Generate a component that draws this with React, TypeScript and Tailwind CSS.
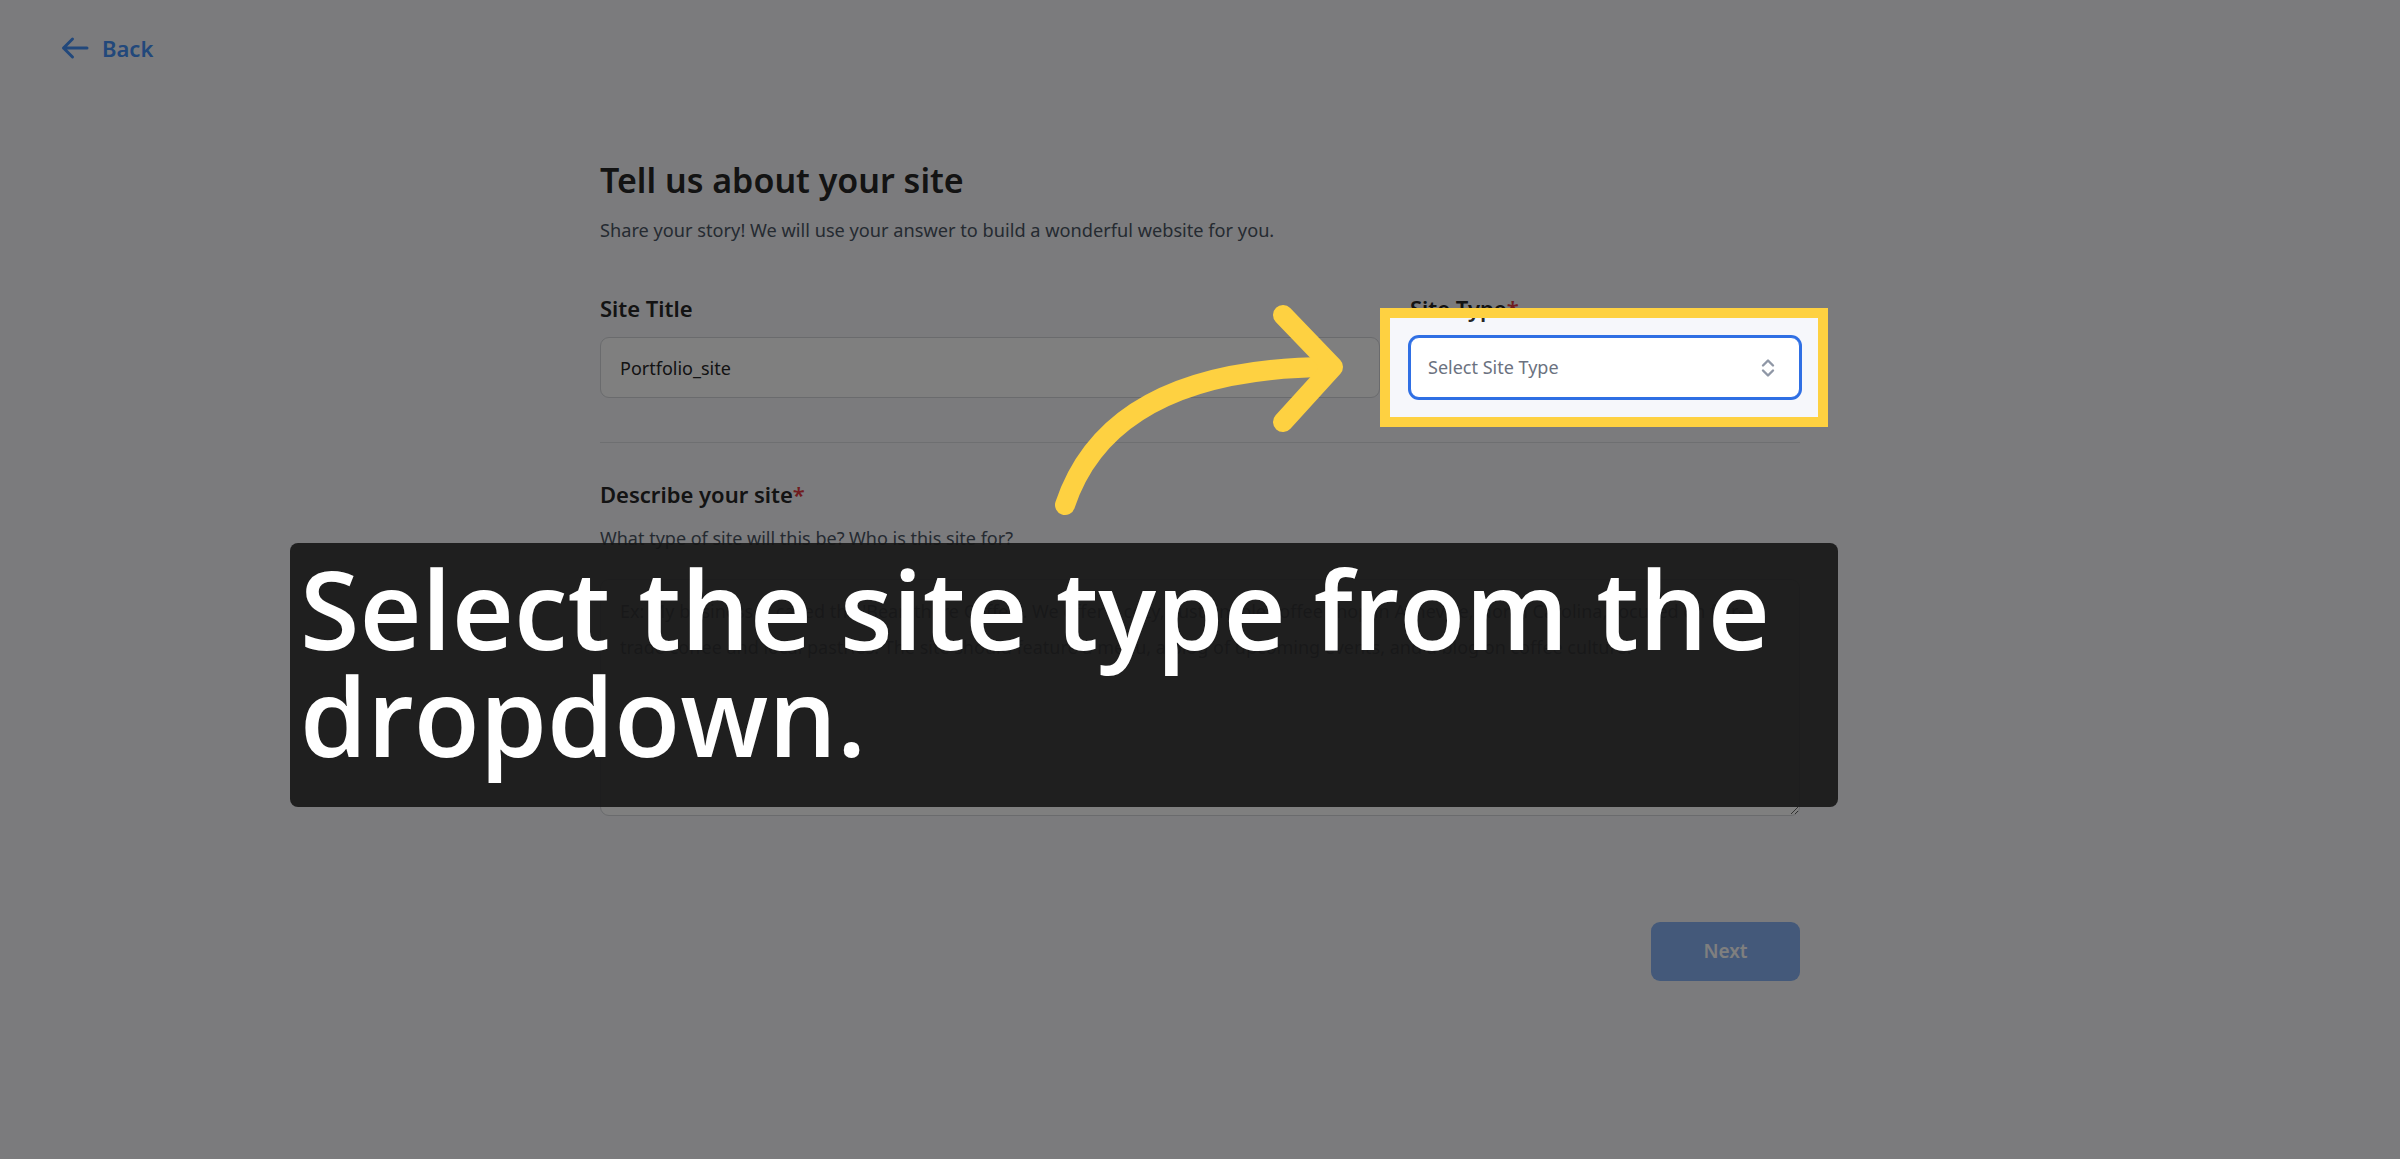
import React from "react";

export default function App() {
  const ui = { fontFamily: '"Noto Sans", "Open Sans", Arial, sans-serif' };
  return (
    <div className="relative w-full h-[1159px] overflow-hidden bg-[#f6f7fb]" style={ui}>
      {/* Back link */}
      <div className="flex items-center gap-[13px] pl-[62px] pt-[34px] h-[62px]">
        <svg width="28" height="24" viewBox="0 0 28 24" fill="none" className="-ml-[1px]">
          <path d="M26 12H2.5M11.5 3L2.5 12L11.5 21" stroke="#4590f6" strokeWidth="3" strokeLinecap="round" strokeLinejoin="round" />
        </svg>
        <span className="text-[22px] leading-[28px] font-semibold text-[#4590f6]">Back</span>
      </div>

      {/* Main form */}
      <div className="mx-auto w-[1200px] pt-[98px]">
        <h1 className="text-[34px] leading-[40px] font-semibold text-[#262626]">Tell us about your site</h1>
        <p className="mt-[18px] text-[18.2px] leading-[24px] text-[#4b5563]">
          Share your story! We will use your answer to build a wonderful website for you.
        </p>

        <div className="mt-[52px] flex gap-[30px]">
          <div className="w-[780px]">
            <label className="block text-[22px] leading-[28px] font-semibold text-[#262626]">Site Title</label>
            <input
              readOnly
              value="Portfolio_site"
              className="mt-[15px] block w-full h-[61px] rounded-[9px] border border-[#d4d6da] bg-white px-[19px] text-[18px] text-[#262626] outline-none"
              style={ui}
            />
          </div>
          <div className="flex-1">
            <label className="block text-[22px] leading-[28px] font-semibold text-[#262626]">
              Site Type<span className="text-[#e0393e]">*</span>
            </label>
            <div className="mt-[15px] flex h-[61px] items-center justify-between rounded-[9px] border border-[#2f6fe4] ring-2 ring-[#2f6fe4] bg-white pl-[17px] pr-[24px]">
              <span className="text-[18px] text-[#6b7280]">Select Site Type</span>
              <svg width="14" height="22" viewBox="0 0 14 22" fill="none">
                <path d="M2 8.5L7 3.5L12 8.5M2 13.5L7 18.5L12 13.5" stroke="#8f97a6" strokeWidth="2.4" strokeLinecap="round" strokeLinejoin="round" />
              </svg>
            </div>
          </div>
        </div>

        <div className="mt-[44px] h-px bg-[#dcdee2]" />

        <label className="mt-[37px] block text-[22px] leading-[28px] font-semibold text-[#262626]">
          Describe your site<span className="text-[#e0393e]">*</span>
        </label>
        <p className="mt-[18px] text-[18px] leading-[24px] text-[#4b5563]">
          What type of site will this be? Who is this site for?
        </p>
        <textarea
          className="mt-[29px] block w-full h-[237px] rounded-[9px] border border-[#d4d6da] bg-white px-[19px] pt-[13px] text-[18px] leading-[36px] text-[#262626] placeholder:text-[#6b7280] outline-none"
          style={ui}
          placeholder={
            "Ex: My business is called the 'Bean there Coffee'. We offer a cozy, sustainable coffee shop in Asheville, North Carolina, focused on fair-\ntrade coffee and local pastries. The site should feature a menu, a blog of upcoming events, and a blog on coffee culture."
          }
        />

        <div className="mt-[106px] flex justify-end">
          <button className="w-[149px] h-[59px] rounded-[9px] bg-[#88b2f4] text-[19px] font-semibold text-white">
            Next
          </button>
        </div>
      </div>

      {/* Highlight box with dimming */}
      <div className="absolute left-[1380px] top-[308px] w-[448px] h-[119px] border-[10px] border-[#fed141] shadow-[0_0_0_9999px_rgba(0,0,0,0.5)]" />

      {/* Yellow arrow */}
      <svg className="absolute left-[1030px] top-[290px]" width="340" height="240" viewBox="0 0 340 240" fill="none">
        <path d="M35 215C60 140 130 78 298 77" stroke="#fed141" strokeWidth="20" strokeLinecap="round" />
        <path d="M253 25L303 77L253 132" stroke="#fed141" strokeWidth="20" strokeLinecap="round" strokeLinejoin="round" />
      </svg>

      {/* Caption */}
      <div
        className="absolute left-[290px] top-[543px] w-[1548px] h-[264px] rounded-[8px] bg-[rgba(21,21,21,0.9)] pl-[10px] pt-[12px]"
        style={{ fontFamily: '"Open Sans", "Noto Sans", sans-serif' }}
      >
        <div className="whitespace-nowrap text-[108px] leading-[107px] font-semibold text-white">
          Select the site type from the
          <br />
          dropdown.
        </div>
      </div>
    </div>
  );
}
